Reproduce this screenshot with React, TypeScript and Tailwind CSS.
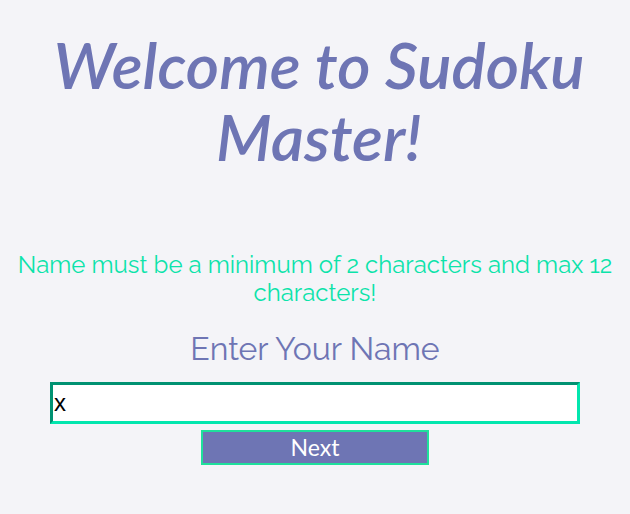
import React from "react";

export default function App() {
  return (
    <div className="min-h-[514px] w-full bg-[#f4f4f8] flex flex-col items-center text-center pt-[29px]">
      <h1 className="font-['Lato',sans-serif] italic font-semibold text-[64px] leading-[72px] text-[#6e75b4] w-[568px] pl-[8px]">
        Welcome to Sudoku Master!
      </h1>
      <p className="mt-[78px] font-['Raleway','Lato',sans-serif] text-[24px] leading-[28px] text-[#0ce3aa] px-[12px]">
        Name must be a minimum of 2 characters and max 12 characters!
      </p>
      <h2 className="mt-[23px] font-['Raleway','Lato',sans-serif] text-[32px] leading-[38px] text-[#6e75b4]">
        Enter Your Name
      </h2>
      <input
        defaultValue="x"
        className="mt-[14px] w-[530px] h-[42px] bg-white border-[3px] border-t-[#009272] border-l-[#009272] border-b-[#02e6ae] border-r-[#02e6ae] pl-[1px] font-['Liberation_Sans',sans-serif] text-[24px] text-black outline-none"
      />
      <button className="mt-[6px] w-[228px] h-[35px] bg-[#6e75b4] border-2 border-[#1ee09c] text-white font-['Lato',sans-serif] text-[23px] leading-[31px]">
        Next
      </button>
    </div>
  );
}
